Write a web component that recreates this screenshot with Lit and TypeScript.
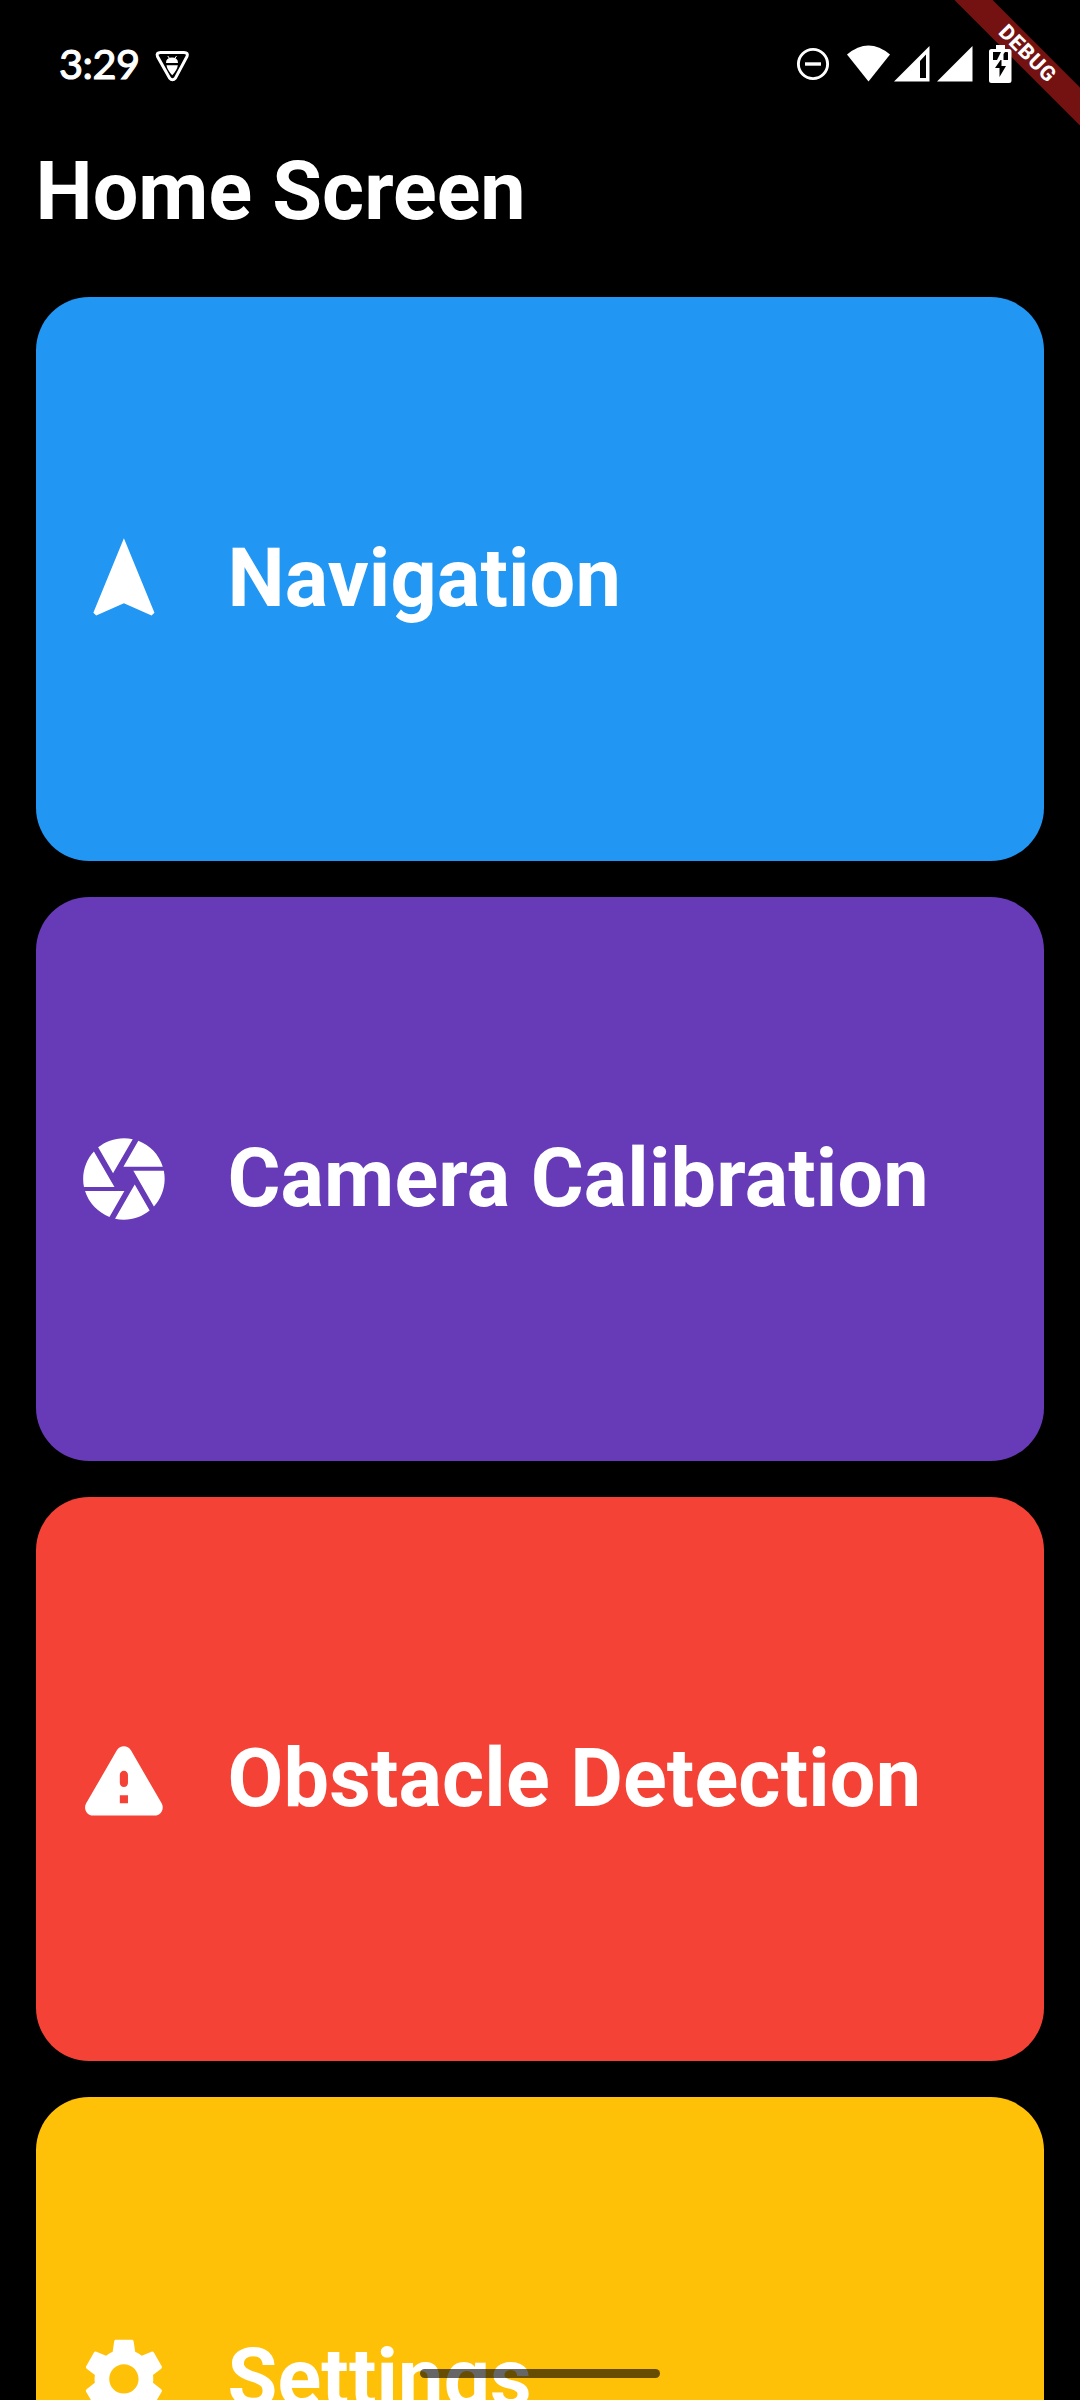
import { LitElement, html, css, svg } from "lit";
import { customElement } from "lit/decorators.js";

const NAVIGATION = svg`<path d="M12 2L4.5 20.29l.71.71L12 18l6.79 3 .71-.71z"/>`;
const CAMERA = svg`<path d="M9.4 10.5l4.77-8.26C13.47 2.09 12.75 2 12 2c-2.4 0-4.6.85-6.32 2.25l3.66 6.35.06-.1zM21.54 9c-.92-2.92-3.15-5.26-6-6.34L11.88 9h9.66zm.26 1h-7.49l.29.5 4.76 8.25C20.97 17 22 14.61 22 12c0-.69-.07-1.35-.2-2zM8.54 12l-3.9-6.75C3.01 7.03 2 9.39 2 12c0 .69.07 1.35.2 2h7.49l-1.15-2zm-6.08 3c.92 2.92 3.15 5.26 6 6.34L12.12 15H2.46zm11.27 0l-3.9 6.76c.7.15 1.42.24 2.17.24 2.4 0 4.6-.85 6.32-2.25l-3.66-6.35-.93 1.6z"/>`;
const WARNING = svg`<path d="M4.47 21h15.06c1.54 0 2.5-1.67 1.73-3L13.73 4.99c-.77-1.33-2.69-1.33-3.46 0L2.74 18c-.77 1.33.19 3 1.73 3zM12 14c-.55 0-1-.45-1-1v-2c0-.55.45-1 1-1s1 .45 1 1v2c0 .55-.45 1-1 1zm1 4h-2v-2h2v2z"/>`;
const SETTINGS = svg`<path d="M19.14 12.94c.04-.3.06-.61.06-.94 0-.32-.02-.64-.07-.94l2.03-1.58c.18-.14.23-.41.12-.61l-1.92-3.32c-.12-.22-.37-.29-.59-.22l-2.39.96c-.5-.38-1.03-.7-1.62-.94l-.36-2.54c-.04-.24-.24-.41-.48-.41h-3.84c-.24 0-.43.17-.47.41l-.36 2.54c-.59.24-1.13.57-1.62.94l-2.39-.96c-.22-.08-.47 0-.59.22L2.74 8.87c-.12.21-.08.47.12.61l2.03 1.58c-.05.3-.09.63-.09.94s.02.64.07.94l-2.03 1.58c-.18.14-.23.41-.12.61l1.92 3.32c.12.22.37.29.59.22l2.39-.96c.5.38 1.03.7 1.62.94l.36 2.54c.05.24.24.41.48.41h3.84c.24 0 .44-.17.47-.41l.36-2.54c.59-.24 1.13-.56 1.62-.94l2.39.96c.22.08.47 0 .59-.22l1.92-3.32c.12-.22.07-.47-.12-.61l-2.01-1.58zM12 15.6c-1.98 0-3.6-1.62-3.6-3.6s1.62-3.6 3.6-3.6 3.6 1.62 3.6 3.6-1.62 3.6-3.6 3.6z"/>`;

const CARDS = [
  { label: "Navigation", tone: "blue", icon: NAVIGATION },
  { label: "Camera Calibration", tone: "purple", icon: CAMERA },
  { label: "Obstacle Detection", tone: "red", icon: WARNING },
  { label: "Settings", tone: "amber", icon: SETTINGS },
];

@customElement("app-root")
export class AppRoot extends LitElement {
  static styles = css`
    :host {
      display: block;
      position: relative;
      width: 1080px;
      height: 2400px;
      overflow: hidden;
      background: #000;
      color: #fff;
      font-family: Roboto, "Liberation Sans", sans-serif;
    }
    svg { display: block; }
    .status {
      position: relative;
      z-index: 2;
      display: flex;
      justify-content: space-between;
      height: 128px;
      box-sizing: border-box;
      padding-left: 59px;
    }
    .left { display: flex; }
    .time {
      font-family: Lato, sans-serif;
      font-size: 41.5px;
      font-weight: 400;
      -webkit-text-stroke: 1.1px #fff;
      letter-spacing: -0.5px;
      line-height: 50px;
      width: 96px;
      padding-top: 38px;
      white-space: nowrap;
    }
    h1 {
      margin: 0;
      height: 169px;
      box-sizing: border-box;
      padding: 16px 35.55px 0;
      font-size: 80.9px;
      line-height: 95px;
      font-weight: 700;
      white-space: nowrap;
    }
    .list {
      display: flex;
      flex-direction: column;
      gap: 35.55px;
      padding: 0 35.55px;
    }
    .card {
      flex: none;
      display: flex;
      align-items: center;
      height: 564.45px;
      border-radius: 53.33px;
      box-sizing: border-box;
      padding-left: 39.5px;
      gap: 54.6px;
    }
    .card svg { width: 97.8px; height: 97.8px; fill: #fff; }
    .label {
      font-size: 81px;
      letter-spacing: 0.16px;
      line-height: 95px;
      padding-bottom: 2px;
      font-weight: 700;
      white-space: nowrap;
    }
    .blue { background: #2196f3; }
    .purple { background: #673ab7; }
    .red { background: #f44336; }
    .amber { background: #ffc107; }
    .banner {
      position: absolute;
      z-index: 1;
      top: 0;
      right: 0;
      width: 128px;
      height: 128px;
      overflow: hidden;
    }
    .ribbon {
      position: absolute;
      left: -45.5px;
      top: 40px;
      width: 240px;
      height: 27px;
      line-height: 27px;
      background: rgba(183, 28, 28, 0.63);
      transform: rotate(45deg);
      text-align: center;
      font-size: 21px;
      letter-spacing: 0.9px;
      text-indent: 1px;
      font-weight: 800;
    }
    .handle {
      position: absolute;
      left: 420px;
      top: 2369px;
      width: 240px;
      height: 9px;
      border-radius: 5px;
      background: rgba(0, 0, 0, 0.6);
    }
  `;

  render() {
    return html`
      <div class="status">
        <div class="left">
          <div class="time">3:29</div>
          <svg width="40" height="128" viewBox="155 0 40 128" fill="#fff">
            <path d="M160.500 52.500h23.500q4.500 0 3 4l-11.500 21.500q-3 3.500-6 0l-12-21.500q-1.500-4 3-4z" fill="none" stroke="#fff" stroke-width="3"/>
            <path d="M166 63q0-5.500 6-5.500t6 5.500zM166.500 65.200h11.300q-.5 4.500-5.600 10-5-5.500-5.700-10z"/>
            <path d="M167.800 56l2 3M176.500 56l-2 3" stroke="#fff" stroke-width="1"/>
          </svg>
        </div>
        <svg width="300" height="128" viewBox="780 0 300 128" fill="#fff">
          <circle cx="813" cy="64" r="14.600" fill="none" stroke="#fff" stroke-width="2.900"/>
          <path d="M805 62.300h16v3.400h-16z"/>
          <path d="M847 54.500Q868.500 36.500 890 54.500L868.500 81.500z"/>
          <path fill-rule="evenodd" d="M929.500 46v35.500H894zM926 54.500l-6 6.500v17h6z"/>
          <path d="M972.500 46v35.500H937z"/>
          <path fill-rule="evenodd" d="M996 45h9v4h4q2.500 0 2.500 2.500v29q0 2.500-2.500 2.500h-17.500q-2.500 0-2.500-2.500v-29q0-2.500 2.500-2.500h4.500zM993 52v8h4l4-8zM1003.500 54v6h4.500v-8h-3zM1000.500 60l-5.500 8h4.500v9l6.500-11h-4.500v-6z"/>
        </svg>
      </div>
      <h1>Home Screen</h1>
      <div class="list">
        ${CARDS.map(
          (c) => html`<div class="card ${c.tone}">
            <svg viewBox="0 0 24 24">${c.icon}</svg>
            <span class="label">${c.label}</span>
          </div>`
        )}
      </div>
      <div class="banner"><div class="ribbon">DEBUG</div></div>
      <div class="handle"></div>
    `;
  }
}
